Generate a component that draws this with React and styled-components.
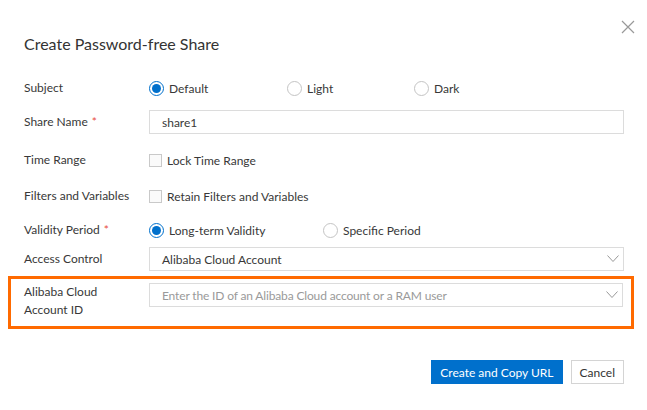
import React from "react";
import styled, { createGlobalStyle } from "styled-components";

const FONT = `"Lato", "Liberation Sans", sans-serif`;

const Global = createGlobalStyle`
  html, body { margin: 0; padding: 0; background: #fff; }
  body { font-family: ${FONT}; color: #333; }
  * { box-sizing: border-box; }
`;

const Dialog = styled.div`
  position: relative;
  width: 647px;
  height: 410px;
  background: #fff;
  padding: 34px 23px 0 24px;
`;

const Close = styled.button`
  position: absolute;
  top: 19px;
  right: 12px;
  width: 15px;
  height: 15px;
  padding: 0;
  border: 0;
  background: transparent;
  display: flex;
  align-items: center;
  justify-content: center;
  cursor: pointer;
`;

const Title = styled.h2`
  margin: 0 0 22px;
  font-size: 16px;
  line-height: 20px;
  font-weight: 400;
  color: #333;
`;

const Row = styled.div`
  display: flex;
  align-items: ${(p) => (p.$top ? "flex-start" : "center")};
  min-height: 24px;
  margin-top: ${(p) => p.$gap || 0}px;
`;

const Label = styled.div`
  width: 125px;
  flex: none;
  font-size: 12px;
  line-height: 18px;
  color: #383838;
`;

const Req = styled.span`
  color: #e84c3d;
  margin-left: 4px;
`;

const Control = styled.div`
  flex: 1;
  display: flex;
  align-items: center;
`;

const RadioItem = styled.label`
  display: inline-flex;
  align-items: center;
  width: ${(p) => p.$w}px;
  font-size: 12px;
  color: #383838;
`;

const RadioDot = styled.span`
  width: 15px;
  height: 15px;
  border-radius: 50%;
  border: 1px solid ${(p) => (p.$on ? "#0070cc" : "#c4c4c4")};
  background: #fff;
  display: inline-flex;
  align-items: center;
  justify-content: center;
  margin-right: 5px;
  flex: none;
  &::after {
    content: "";
    width: 9px;
    height: 9px;
    border-radius: 50%;
    background: ${(p) => (p.$on ? "#0070cc" : "transparent")};
  }
`;

const CheckItem = styled.label`
  display: inline-flex;
  align-items: center;
  font-size: 12px;
  color: #383838;
`;

const Box = styled.span`
  width: 13px;
  height: 13px;
  border: 1px solid #c9c9c9;
  background: #fafafa;
  margin-right: 5px;
  flex: none;
`;

const Field = styled.div`
  flex: 1;
  height: 24px;
  border: 1px solid #dcdcdc;
  background: #fff;
  display: flex;
  align-items: center;
  padding: 0 4px 0 12px;
  font-size: 12px;
  color: ${(p) => (p.$placeholder ? "#9a9a9a" : "#383838")};
`;

const FieldText = styled.span`
  flex: 1;
  letter-spacing: ${(p) => (p.$tight ? "-0.15px" : "0")};
`;

const Highlight = styled.div`
  margin: 5px -10px 0 -16px;
  border: 3px solid #ff6a00;
  padding: 4px 8px 7px 13px;
`;

const Footer = styled.div`
  display: flex;
  justify-content: flex-end;
  gap: 8px;
  margin-top: 31px;
`;

const Button = styled.button`
  height: 24px;
  padding: 0 ${(p) => (p.$primary ? 8 : 8)}px;
  font-family: ${FONT};
  font-size: 12px;
  border: 1px solid ${(p) => (p.$primary ? "#0070cc" : "#d4d4d4")};
  background: ${(p) => (p.$primary ? "#0070cc" : "#fff")};
  color: ${(p) => (p.$primary ? "#fff" : "#333")};
  cursor: pointer;
`;

const Chevron = () => (
  <svg width="12" height="8" viewBox="0 0 12 8">
    <path d="M0.5 0.5 L6 6.5 L11.5 0.5" fill="none" stroke="#999" strokeWidth="1" />
  </svg>
);

export default function App() {
  return (
    <>
      <Global />
      <Dialog>
        <Close aria-label="close">
          <svg width="14" height="14" viewBox="0 0 14 14">
            <path d="M1 1 L13 13 M13 1 L1 13" stroke="#999" strokeWidth="1.2" fill="none" />
          </svg>
        </Close>
        <Title>Create Password-free Share</Title>

        <Row>
          <Label>Subject</Label>
          <Control>
            <RadioItem $w={138}><RadioDot $on />Default</RadioItem>
            <RadioItem $w={127}><RadioDot />Light</RadioItem>
            <RadioItem><RadioDot />Dark</RadioItem>
          </Control>
        </Row>

        <Row $gap={10}>
          <Label>Share Name<Req>*</Req></Label>
          <Field><FieldText>share1</FieldText></Field>
        </Row>

        <Row $gap={14}>
          <Label>Time Range</Label>
          <Control>
            <CheckItem><Box />Lock Time Range</CheckItem>
          </Control>
        </Row>

        <Row $gap={12}>
          <Label>Filters and Variables</Label>
          <Control>
            <CheckItem><Box />Retain Filters and Variables</CheckItem>
          </Control>
        </Row>

        <Row $gap={10}>
          <Label>Validity Period<Req>*</Req></Label>
          <Control>
            <RadioItem $w={174}><RadioDot $on />Long-term Validity</RadioItem>
            <RadioItem><RadioDot />Specific Period</RadioItem>
          </Control>
        </Row>

        <Row $gap={5}>
          <Label>Access Control</Label>
          <Field>
            <FieldText>Alibaba Cloud Account</FieldText>
            <Chevron />
          </Field>
        </Row>

        <Highlight>
          <Row $top>
            <Label>Alibaba Cloud<br />Account ID</Label>
            <Field $placeholder>
              <FieldText $tight>Enter the ID of an Alibaba Cloud account or a RAM user</FieldText>
              <Chevron />
            </Field>
          </Row>
        </Highlight>

        <Footer>
          <Button $primary>Create and Copy URL</Button>
          <Button>Cancel</Button>
        </Footer>
      </Dialog>
    </>
  );
}
